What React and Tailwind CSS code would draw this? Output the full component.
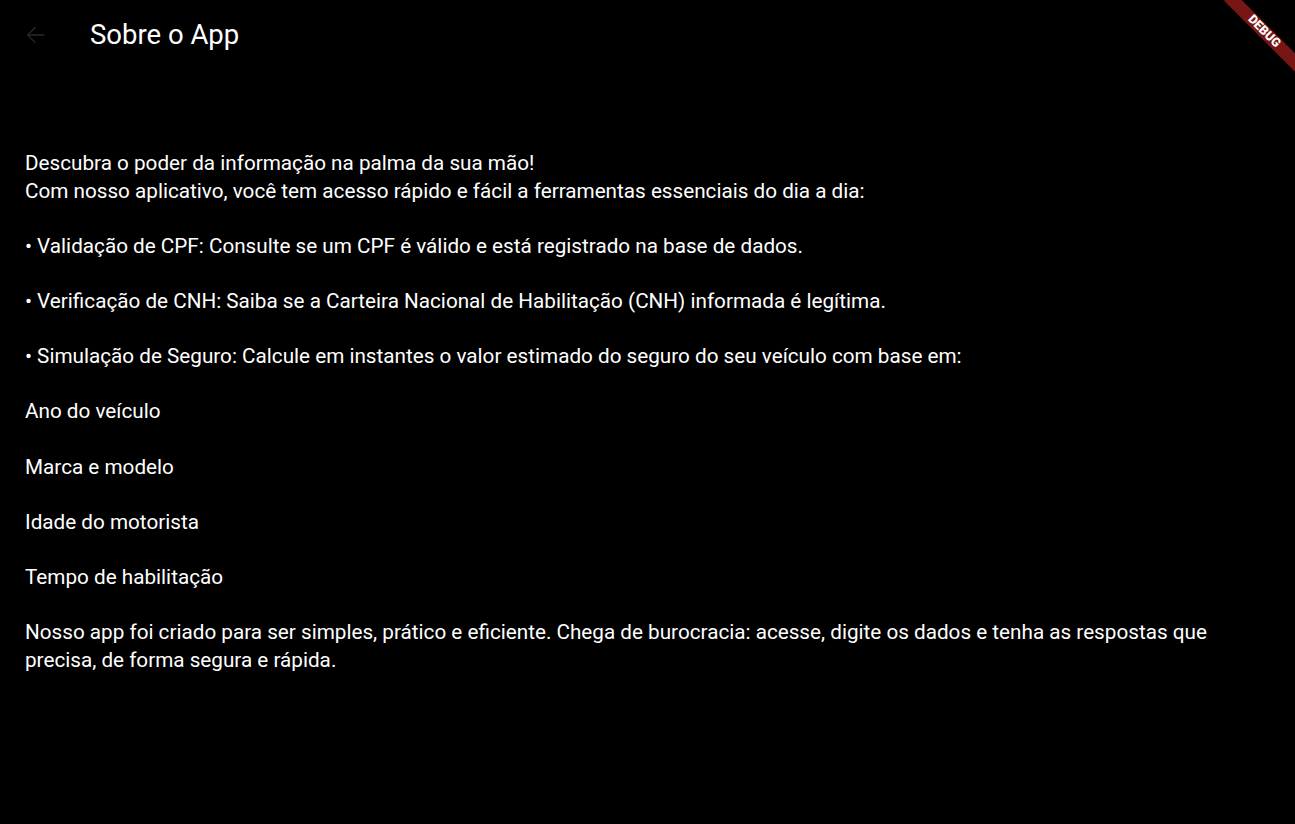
import React from "react";

const texto = `Descubra o poder da informação na palma da sua mão!
Com nosso aplicativo, você tem acesso rápido e fácil a ferramentas essenciais do dia a dia:

• Validação de CPF: Consulte se um CPF é válido e está registrado na base de dados.

• Verificação de CNH: Saiba se a Carteira Nacional de Habilitação (CNH) informada é legítima.

• Simulação de Seguro: Calcule em instantes o valor estimado do seguro do seu veículo com base em:

Ano do veículo

Marca e modelo

Idade do motorista

Tempo de habilitação

Nosso app foi criado para ser simples, prático e eficiente. Chega de burocracia: acesse, digite os dados e tenha as respostas que precisa, de forma segura e rápida.`;

function AppBar() {
  return (
    <header className="h-[69px] flex items-center">
      {/* Back button (disabled look) */}
      <button className="w-[70px] h-[69px] flex items-center justify-center text-[#2a2a2d]">
        <svg width="28" height="28" viewBox="0 0 24 24" fill="currentColor">
          <path d="M20 11.3H7.1l5.6-5.6-.75-.75L5 12l6.95 6.95.75-.75-5.6-5.6H20v-1.3z" />
        </svg>
      </button>
      <h1 className="ml-[20px] text-[27.5px] text-white leading-none">Sobre o App</h1>
    </header>
  );
}

function DebugBanner() {
  return (
    <div className="absolute top-[25px] right-[-18.5px] w-[100px] h-[13px] rotate-45 bg-[#781515] text-white text-[12.5px] font-black flex items-center justify-center leading-none pointer-events-none">
      DEBUG
    </div>
  );
}

export default function App() {
  return (
    <div
      className="relative min-h-[824px] bg-black text-white overflow-hidden"
      style={{ fontFamily: "Roboto, 'Noto Sans', sans-serif" }}
    >
      <AppBar />
      <DebugBanner />
      <main className="px-[25px] pt-[81px]">
        <p className="whitespace-pre-line text-[20.7px] leading-[27.6px]">{texto}</p>
      </main>
    </div>
  );
}
